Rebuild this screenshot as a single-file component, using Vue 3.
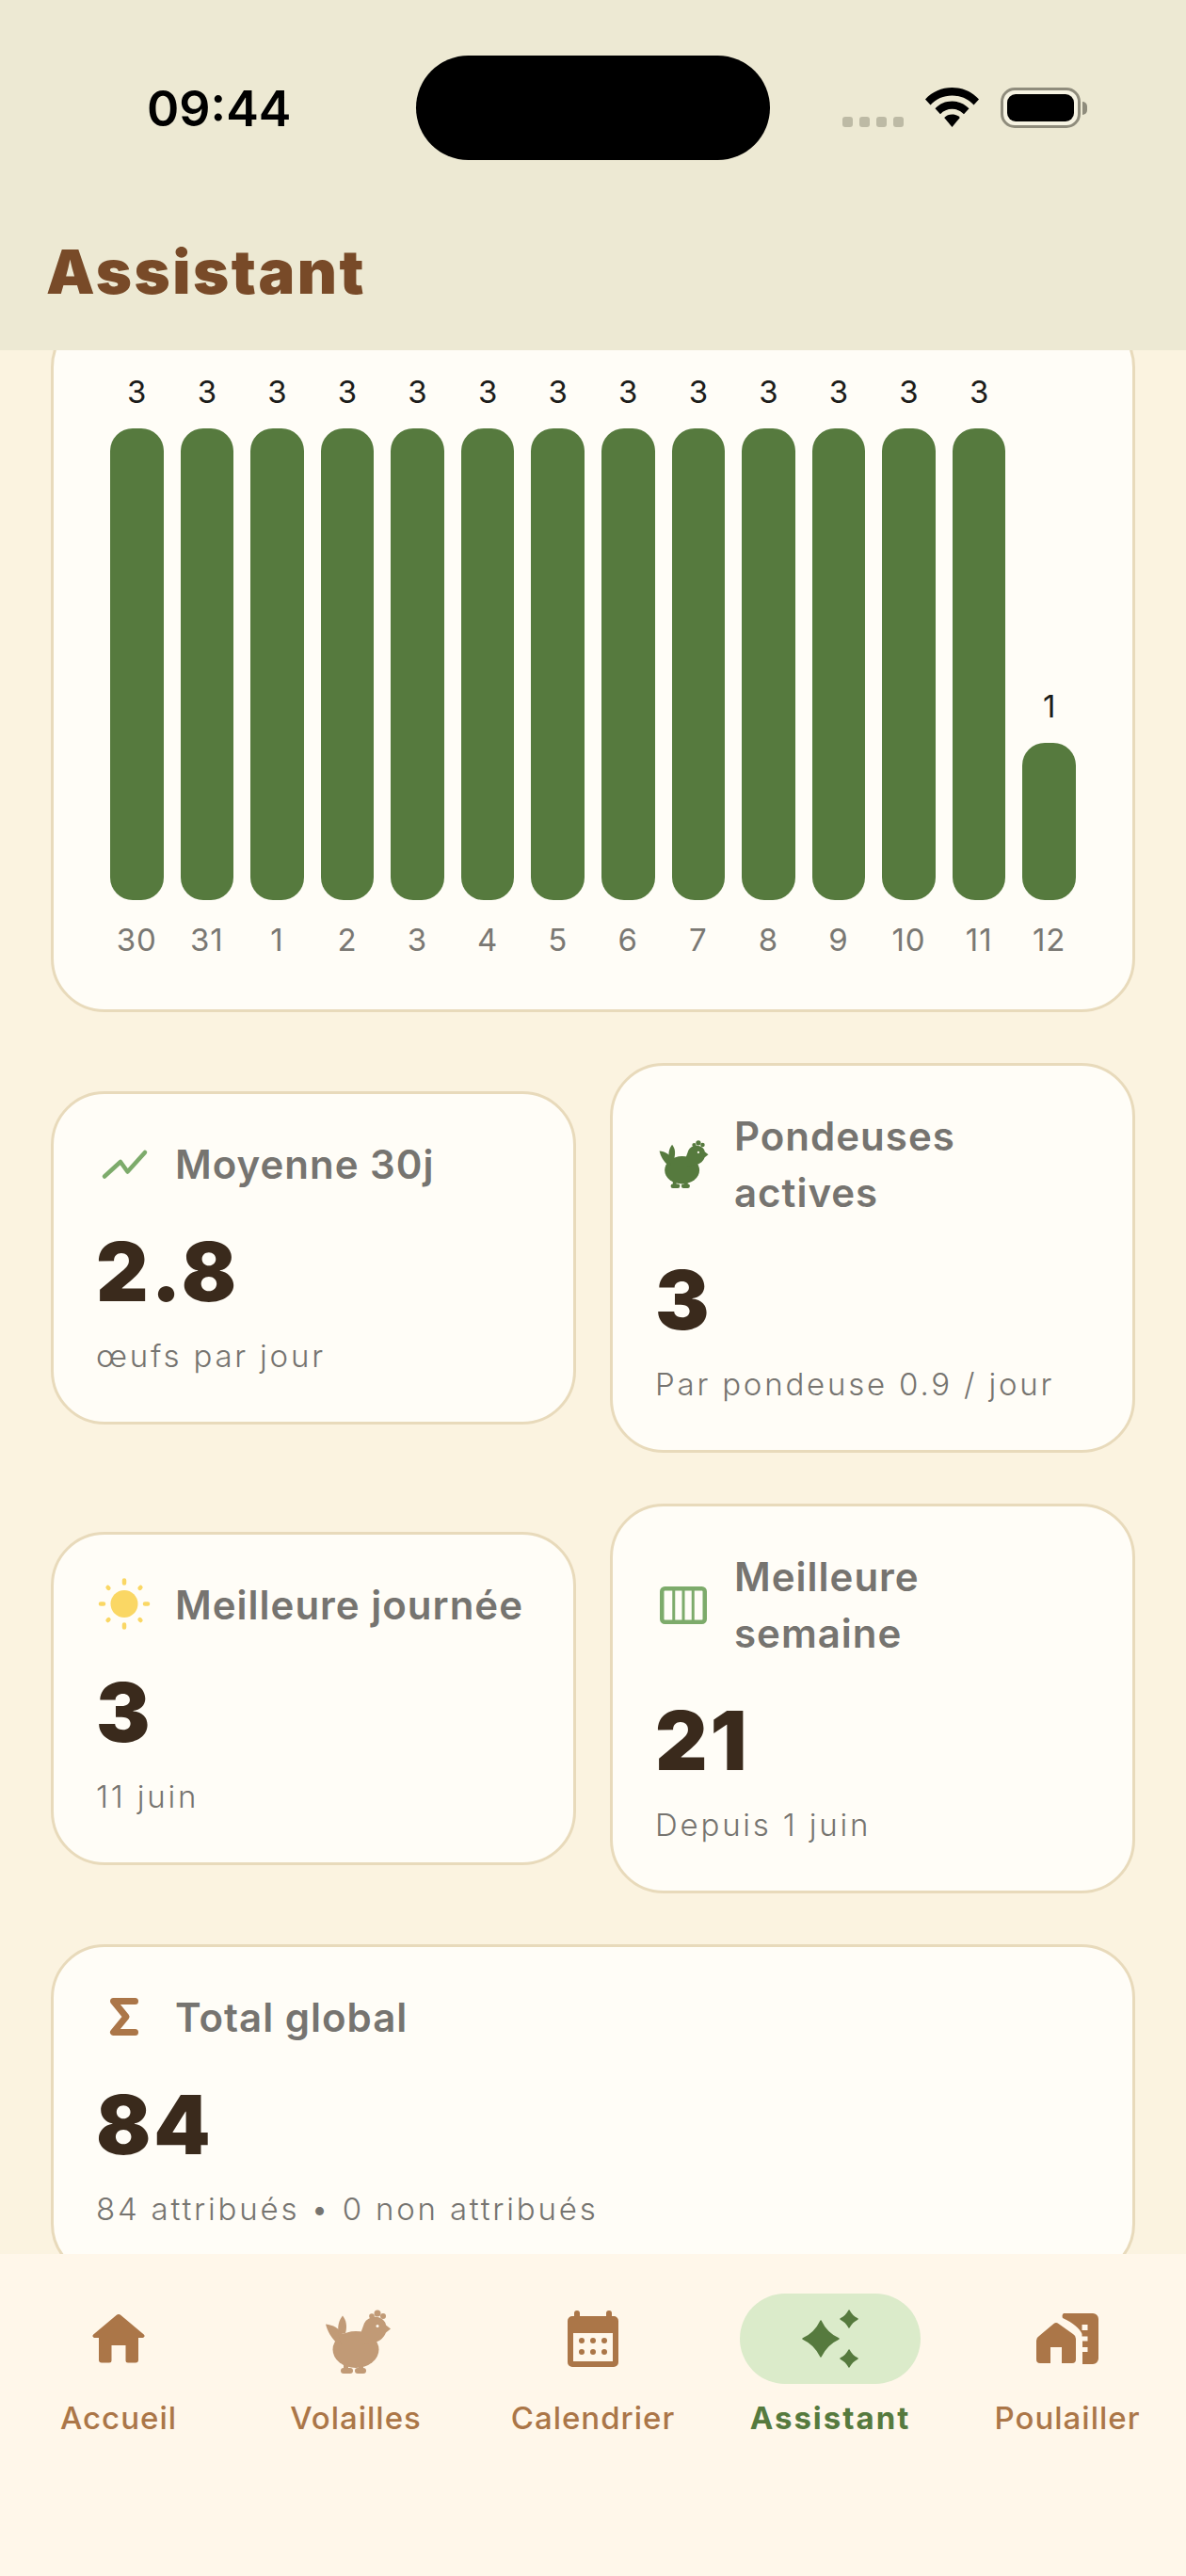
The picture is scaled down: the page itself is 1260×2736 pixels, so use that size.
<template>
  <div class="screen">
    <header class="top">
      <div class="status">
        <span class="time">09:44</span>
        <div class="island"></div>
        <div class="status-right">
          <div class="signal"><i></i><i></i><i></i><i></i></div>
          <svg class="wifi" viewBox="0 0 57 42" width="57" height="42">
            <path d="M28.5 0C39.5 0 49.5 4.3 57 12.5L51.5 18.5C45.5 12 37.5 8.5 28.5 8.5S11.5 12 5.5 18.5L0 12.5C7.5 4.3 17.5 0 28.5 0Z" />
            <path d="M28.5 14.5C35.5 14.5 41.8 17.2 46.5 22.3L41 28.2C37.7 24.7 33.3 22.8 28.5 22.8S19.3 24.7 16 28.2L10.5 22.3C15.2 17.2 21.5 14.5 28.5 14.5Z" />
            <path d="M28.5 28.5C31.7 28.5 34.7 29.7 36.8 31.9L28.5 42L20.2 31.9C22.3 29.7 25.3 28.5 28.5 28.5Z" />
          </svg>
          <div class="battery"><div class="battery-fill"></div></div>
          <div class="battery-cap"></div>
        </div>
      </div>
      <h1 class="title">Assistant</h1>
    </header>

    <main class="scroll">
      <div class="scroll-inner">
        <section class="card chart">
          <div class="bars">
            <div v-for="d in days" :key="d.label" class="col">
              <span class="count">{{ d.value }}</span>
              <div class="bar" :style="{ height: d.value * 167 + 'px' }"></div>
              <span class="day">{{ d.label }}</span>
            </div>
          </div>
        </section>

        <div class="stats">
          <section class="card stat">
            <div class="stat-head">
              <span class="stat-icon">
                <svg viewBox="0 0 60 60" width="60" height="60"><path d="M9 42.500L26 27 33.500 37.500 52 17" fill="none" stroke="#7dab6b" stroke-width="4.500" stroke-linecap="round" stroke-linejoin="round" /></svg>
              </span>
              <span class="stat-label">Moyenne 30j</span>
            </div>
            <div class="stat-value">2.8</div>
            <div class="stat-sub">œufs par jour</div>
          </section>

          <section class="card stat">
            <div class="stat-head">
              <span class="stat-icon">
                <svg viewBox="9 8 73 70" width="55" height="53" fill="#567a3e"><use href="#hen" /></svg>
              </span>
              <span class="stat-label">Pondeuses<br />actives</span>
            </div>
            <div class="stat-value">3</div>
            <div class="stat-sub">Par pondeuse 0.9 / jour</div>
          </section>

          <section class="card stat">
            <div class="stat-head">
              <span class="stat-icon">
                <svg viewBox="0 0 60 60" width="60" height="60">
                  <circle cx="30" cy="28.500" r="14.500" fill="#fad764" />
                  <path d="M30 3.500v3M30 50.500v3M5 28.500h3M52 28.500h3M12.600 11l.8.8M46.600 45.200l.8.8M12.600 46l.8-.8M46.600 11.800l.8-.8" stroke="#fad764" stroke-width="4.500" stroke-linecap="round" />
                </svg>
              </span>
              <span class="stat-label">Meilleure journée</span>
            </div>
            <div class="stat-value">3</div>
            <div class="stat-sub">11 juin</div>
          </section>

          <section class="card stat">
            <div class="stat-head">
              <span class="stat-icon">
                <svg viewBox="0 0 60 60" width="60" height="60">
                  <rect x="7.250" y="12.250" width="45.500" height="35.500" rx="3" fill="none" stroke="#7dab6b" stroke-width="4.500" />
                  <path d="M19.750 12v36M30 12v36M40.250 12v36" stroke="#7dab6b" stroke-width="3" />
                </svg>
              </span>
              <span class="stat-label">Meilleure<br />semaine</span>
            </div>
            <div class="stat-value">21</div>
            <div class="stat-sub">Depuis 1 juin</div>
          </section>

          <section class="card stat wide">
            <div class="stat-head">
              <span class="stat-icon">
                <svg viewBox="0 0 60 60" width="60" height="60"><path d="M41.500 12.500H18.500L32 29 18.500 45.500H41.500" fill="none" stroke="#ab7648" stroke-width="7" stroke-linecap="round" stroke-linejoin="round" /></svg>
              </span>
              <span class="stat-label">Total global</span>
            </div>
            <div class="stat-value">84</div>
            <div class="stat-sub">84 attribués • 0 non attribués</div>
          </section>
        </div>
      </div>
    </main>

    <nav class="tabs">
      <div v-for="t in tabs" :key="t.id" class="tab" :class="{ active: t.id === 'assistant' }">
        <div class="tab-icon">
          <svg v-if="t.id === 'home'" viewBox="0 0 56 52" width="56" height="52" fill="#ab7648">
            <path d="M25.600 1.100a3.600 3.600 0 0 1 4.800 0L54.800 21.500c1.500 1.300.6 3.500-1.300 3.500H49v23.500a3 3 0 0 1-3 3H38a2.500 2.500 0 0 1-2.500-2.500V33h-15v16a2.500 2.500 0 0 1-2.500 2.500H10a3 3 0 0 1-3-3V25H2.500C.6 25-.3 22.800 1.200 21.500Z" />
          </svg>
          <svg v-else-if="t.id === 'hen'" viewBox="-2 -3.500 90 85" width="90" height="85" fill="#c19a76"><use href="#hen" /></svg>
          <svg v-else-if="t.id === 'cal'" viewBox="0 0 54 60" width="54" height="60" fill="#ab7648">
            <path fill-rule="evenodd" d="M10 0a3 3 0 0 1 3 3v3h28V3a3 3 0 0 1 6 0v3h2a5 5 0 0 1 5 5v44a5 5 0 0 1-5 5H5a5 5 0 0 1-5-5V11a5 5 0 0 1 5-5h2V3a3 3 0 0 1 3-3ZM6 24v30h42V24Z" />
            <circle cx="15" cy="32" r="3" /><circle cx="27" cy="32" r="3" /><circle cx="39" cy="32" r="3" />
            <circle cx="15" cy="44" r="3" /><circle cx="27" cy="44" r="3" /><circle cx="39" cy="44" r="3" />
          </svg>
          <svg v-else-if="t.id === 'assistant'" viewBox="0 0 60 62" width="60" height="62" fill="#567a3e" stroke="#567a3e" stroke-width="1.500" stroke-linejoin="round">
            <path d="M20 12Q26 25 39 31 26 37 20 50 14 37 1 31 14 25 20 12Z" />
            <path d="M50 1Q53 7 59 10 53 13 50 19 47 13 41 10 47 7 50 1Z" />
            <path d="M50 43Q53 49 59 52 53 55 50 61 47 55 41 52 47 49 50 43Z" />
          </svg>
          <svg v-else viewBox="0 0 88 78" width="88" height="78" fill="#ab7648" fill-rule="evenodd">
            <path d="M29.500 23a4 4 0 0 1 5 0L50 34a6 6 0 0 1 3 5V61a4 4 0 0 1-4 4H38V48H26V65H15a4 4 0 0 1-4-4V41a6 6 0 0 1 3-5Z" />
            <path d="M41 12H71a6 6 0 0 1 6 6V60a6 6 0 0 1-6 6H60V53H65.500V48H60V41.500H65.500V36.500H59.500V34C58 29 50 22 39 17 38 14 39 12 41 12ZM59.500 24V30H65.500V24Z" />
          </svg>
        </div>
        <span class="tab-label">{{ t.label }}</span>
      </div>
    </nav>

    <svg class="defs" width="0" height="0">
      <defs>
        <g id="hen">
          <ellipse cx="43" cy="50" rx="24.500" ry="19.500" />
          <path d="M11 23C19 24 25 27 29 34L24 44C17 38 13 31 11 23Z" />
          <path d="M29 14C33 19 34 25 32 33L25 33C23 26 25 19 29 14Z" />
          <path d="M24 33H48L52 22C54 18 58 16 62 15 70 15 75 20 75 24L80 28 75 32C73 37 69 41 64 42L50 45H28Z" />
          <circle cx="60" cy="14.500" r="2.800" />
          <circle cx="66" cy="11.500" r="3.500" />
          <circle cx="72" cy="14.500" r="3" />
          <path d="M30 65h5v6h-5ZM46 65h5v6h-5Z" />
          <rect x="27" y="69.500" width="13" height="6" rx="3" />
          <rect x="42" y="69.500" width="12" height="6" rx="3" />
          <circle cx="66" cy="25" r="1.500" fill="#fffaf0" />
        </g>
      </defs>
    </svg>
  </div>
</template>

<script setup>
const days = [30, 31, 1, 2, 3, 4, 5, 6, 7, 8, 9, 10, 11, 12].map((n) => ({
  label: n,
  value: n === 12 ? 1 : 3
}))

const tabs = [
  { id: 'home', label: 'Accueil' },
  { id: 'hen', label: 'Volailles' },
  { id: 'cal', label: 'Calendrier' },
  { id: 'assistant', label: 'Assistant' },
  { id: 'coop', label: 'Poulailler' }
]
</script>

<style>
html, body { margin: 0; background: #fbf3e0; }
</style>

<style scoped>
.screen {
  width: 1260px;
  height: 2736px;
  display: flex;
  flex-direction: column;
  overflow: hidden;
  background: #fbf3e0;
  font-family: Inter, "Liberation Sans", sans-serif;
}

/* Header + status bar */
.top {
  flex: 0 0 372px;
  box-sizing: border-box;
  background: #ede9d3;
  padding-top: 59px;
}
.status {
  position: relative;
  height: 111px;
  display: flex;
  justify-content: center;
}
.time {
  position: absolute;
  left: 156px;
  top: 25px;
  font-size: 52px;
  line-height: 63px;
  font-weight: 600;
  color: #000;
}
.island {
  width: 376px;
  height: 111px;
  border-radius: 56px;
  background: #000;
}
.status-right {
  position: absolute;
  left: 895px;
  top: 34px;
  display: flex;
  align-items: flex-start;
}
.signal { display: flex; gap: 7px; margin-top: 31px; margin-right: 23px; }
.signal i { width: 11px; height: 11px; border-radius: 3px; background: #bdbaa5; }
.wifi { margin-right: 23px; }
.wifi path { fill: #000; }
.battery {
  box-sizing: border-box;
  width: 85px;
  height: 43px;
  padding: 4px;
  border: 3px solid #8f8c7c;
  border-radius: 15px;
  background: #f6f3e2;
}
.battery-fill { height: 100%; border-radius: 9px; background: #000; }
.battery-cap {
  width: 5px;
  height: 14px;
  margin: 15px 0 0 2px;
  border-radius: 0 7px 7px 0;
  background: #8f8c7c;
}
.title {
  margin: 81px 0 0 49px;
  font-size: 65px;
  line-height: 76px;
  font-weight: 900;
  letter-spacing: 2.500px;
  color: #784a28;
}

/* Scrolled content */
.scroll { flex: 1 1 auto; min-height: 0; overflow: hidden; }
.scroll-inner { padding: 0 54px; margin-top: -39px; }
.card {
  box-sizing: border-box;
  background: #fffdf7;
  border: 3px solid #e8dabb;
  border-radius: 57px;
}

/* Chart */
.chart { padding: 60px 60px 54px; margin-bottom: 54px; }
.bars {
  display: grid;
  grid-template-columns: repeat(14, 1fr);
  column-gap: 18px;
  align-items: end;
}
.col { display: flex; flex-direction: column; align-items: stretch; text-align: center; }
.count { font-size: 33px; line-height: 40px; color: #1c1c1a; margin-bottom: 19px; }
.bar { background: #567a3e; border-radius: 24px; }
.day { font-size: 33px; line-height: 40px; margin-top: 22px; color: #7a7873; letter-spacing: 1px; }

/* Stats */
.stats {
  display: grid;
  grid-template-columns: 1fr 1fr;
  column-gap: 36px;
  row-gap: 54px;
  align-items: center;
}
.stat { padding: 45px; }
.stat.wide { grid-column: 1 / -1; }
.stat-head { display: flex; align-items: center; gap: 24px; }
.stat-icon { flex: 0 0 60px; height: 60px; display: flex; align-items: center; justify-content: center; }
.stat-label { font-size: 42px; line-height: 60px; font-weight: 600; letter-spacing: 1px; color: #767470; }
.stat-value {
  margin-top: 36px;
  margin-bottom: 16px;
  font-size: 86px;
  line-height: 96px;
  font-weight: 900;
  letter-spacing: 3px;
  color: #3a2a1c;
}
.stat-sub { font-size: 33px; line-height: 50px; font-weight: 350; color: #767470; letter-spacing: 2.800px; }

/* Bottom tabs */
.tabs {
  flex: 0 0 342px;
  box-sizing: border-box;
  display: grid;
  grid-template-columns: repeat(5, 1fr);
  padding-top: 42px;
  background: #fff7ea;
}
.tab { display: flex; flex-direction: column; align-items: center; }
.tab-icon {
  width: 192px;
  height: 96px;
  border-radius: 48px;
  display: flex;
  align-items: center;
  justify-content: center;
}
.tab.active .tab-icon { background: #dbebca; }
.tab-label {
  margin-top: 16px;
  font-size: 33px;
  line-height: 40px;
  font-weight: 500;
  letter-spacing: 1px;
  color: #ab7648;
}
.tab.active .tab-label { font-weight: 700; letter-spacing: 2px; color: #567a3e; }
.defs { position: absolute; }
</style>
